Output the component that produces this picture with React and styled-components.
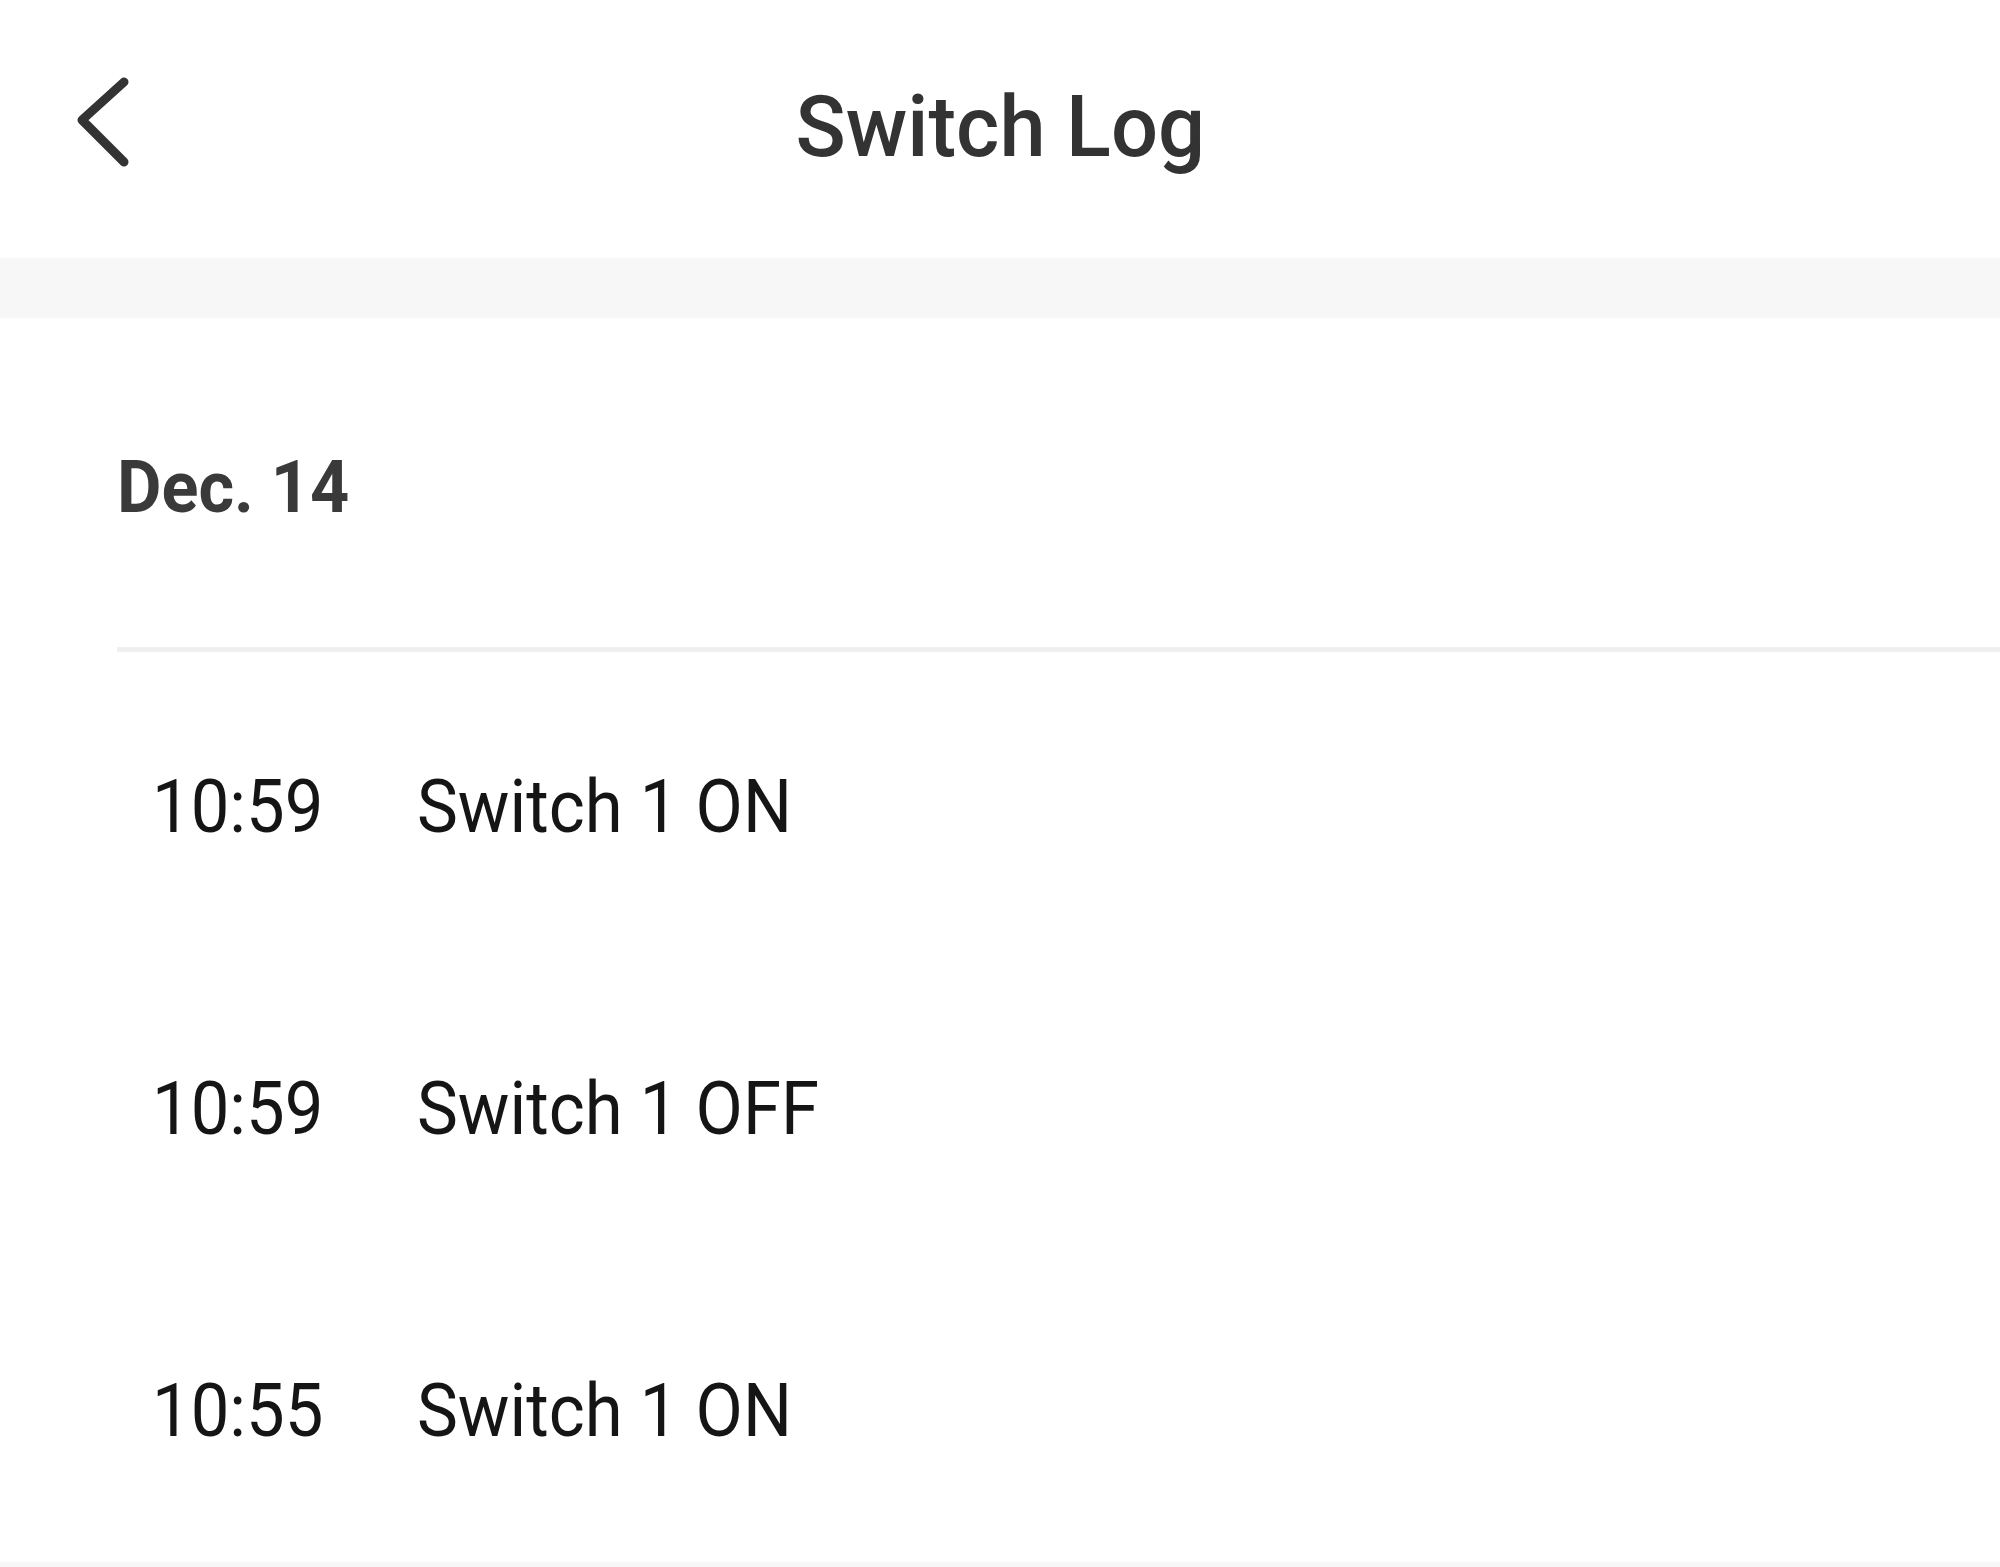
import React from "react"
import styled, { createGlobalStyle } from "styled-components"

const GlobalStyle = createGlobalStyle`
  html, body {
    margin: 0;
    padding: 0;
    background: #fff;
  }
  body {
    font-family: Roboto, "Liberation Sans", sans-serif;
  }
`

const Page = styled.div`
  min-height: 100vh;
  display: flex;
  flex-direction: column;
  background: #fff;
`

const Header = styled.header`
  height: 258px;
  box-sizing: border-box;
  padding-top: 84px;
  display: grid;
  grid-template-columns: 1fr auto 1fr;
  align-items: start;
`

const BackButton = styled.button`
  justify-self: start;
  margin: -10px 0 0 72px;
  padding: 0;
  border: 0;
  background: none;
  width: 64px;
  height: 96px;
  cursor: pointer;
  svg {
    display: block;
  }
`

const Title = styled.h1`
  margin: 0;
  font-size: 86px;
  line-height: 1;
  font-weight: 500;
  color: #333;
  transform: scaleX(0.965);
`

const Band = styled.div`
  height: ${props => props.height || 60}px;
  background: #f7f7f7;
  flex: ${props => (props.fill ? 1 : "none")};
`

const DateHeading = styled.h2`
  margin: 0;
  padding: 134px 0 123px 117px;
  font-size: 72px;
  line-height: 1;
  font-weight: 700;
  color: #3a3a3a;
  span {
    display: inline-block;
    transform: scaleX(0.95);
    transform-origin: left center;
  }
`

const Divider = styled.div`
  margin-left: 117px;
  height: 5px;
  background: #efefef;
`

const List = styled.ul`
  list-style: none;
  margin: 4px 0 0;
  padding: 0;
`

const Row = styled.li`
  height: 302px;
  display: grid;
  grid-template-columns: 265px auto;
  align-items: center;
  padding-left: 152px;
  font-size: 74px;
  line-height: 1;
  color: #151515;
`

const Cell = styled.span`
  display: inline-block;
  justify-self: start;
  transform: scaleX(0.93);
  transform-origin: left center;
`

const entries = [
  { time: "10:59", action: "Switch 1 ON" },
  { time: "10:59", action: "Switch 1 OFF" },
  { time: "10:55", action: "Switch 1 ON" },
]

const BackIcon = () => (
  <svg width="64" height="96" viewBox="0 0 64 96">
    <polyline
      points="52,8 10,46 52,88"
      fill="none"
      stroke="#333"
      strokeWidth="9"
      strokeLinecap="round"
      strokeLinejoin="round"
    />
  </svg>
)

const App = () => {
  return (
    <Page>
      <GlobalStyle />
      <Header>
        <BackButton aria-label="Back">
          <BackIcon />
        </BackButton>
        <Title>Switch Log</Title>
        <div />
      </Header>
      <Band />
      <DateHeading>
        <span>Dec. 14</span>
      </DateHeading>
      <Divider />
      <List>
        {entries.map((e, i) => (
          <Row key={i}>
            <Cell>{e.time}</Cell>
            <Cell>{e.action}</Cell>
          </Row>
        ))}
      </List>
      <Band fill height={0} />
    </Page>
  )
}

export default App
